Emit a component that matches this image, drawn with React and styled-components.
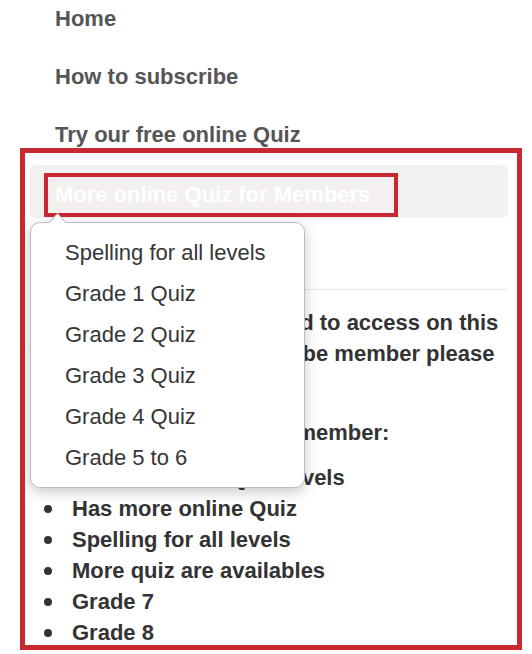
import React from "react";
import styled, { createGlobalStyle } from "styled-components";

// page reset: white page, no body margin, Arial-like font
const GlobalStyle = createGlobalStyle`
  body {
    margin: 0;
    background: #fff;
    font-family: "Liberation Sans", Arial, Helvetica, sans-serif;
  }
`;

const menuItems = [
  "Spelling for all levels",
  "Grade 1 Quiz",
  "Grade 2 Quiz",
  "Grade 3 Quiz",
  "Grade 4 Quiz",
  "Grade 5 to 6",
];

const benefits = [
  "Can access all Quiz levels",
  "Has more online Quiz",
  "Spelling for all levels",
  "More quiz are availables",
  "Grade 7",
  "Grade 8",
];

function App() {
  return (
    <>
      <GlobalStyle />
      <Page>
        <Nav>
          <NavLink>Home</NavLink>
          <NavLink>How to subscribe</NavLink>
          <NavLink>Try our free online Quiz</NavLink>
        </Nav>
        <Frame>
          <MemberBar>
            <Highlight>More online Quiz for Members</Highlight>
          </MemberBar>
          <Divider />
          <Text>
            Members Quiz are required to access on this
            <br />
            website. If you do wish to be member please
            <br />
            contact us.
          </Text>
          <Heading>Some benefits of being a member:</Heading>
          <List>
            {benefits.map((b) => (
              <Bullet key={b}>{b}</Bullet>
            ))}
          </List>
          {/* popover menu opened under the members tab */}
          <Dropdown>
            <Arrow />
            {menuItems.map((item) => (
              <MenuItem key={item}>{item}</MenuItem>
            ))}
          </Dropdown>
        </Frame>
      </Page>
    </>
  );
}

const Page = styled.div`
  width: 532px;
  height: 654px;
  overflow: hidden;
`;

const Nav = styled.nav`
  display: flex;
  flex-direction: column;
  gap: 32px;
  padding: 6px 0 0 55px;
  height: 148px;
  box-sizing: border-box;
`;

const NavLink = styled.a`
  display: block;
  font-size: 22px;
  line-height: 26px;
  font-weight: bold;
  color: #555;
  text-decoration: none;
  cursor: pointer;
`;

const Frame = styled.section`
  position: relative;
  margin-left: 20px;
  width: 502px;
  height: 502px;
  box-sizing: border-box;
  border: 5px solid #c8282f;
  padding: 12px 9px 0 5px;
  overflow: hidden;
`;

const MemberBar = styled.div`
  display: flex;
  align-items: flex-start;
  height: 53px;
  box-sizing: border-box;
  padding: 8px 14px 0;
  background: #f1f1f1;
  border-radius: 6px;
`;

const Highlight = styled.span`
  display: inline-block;
  border: 4px solid #c8282f;
  padding: 0 24px 0 7px;
  height: 44px;
  box-sizing: border-box;
  font-size: 22px;
  line-height: 36px;
  font-weight: bold;
  color: #fff;
  background: #f4f0f0;
`;

const Divider = styled.hr`
  border: none;
  border-top: 1px solid #e8e8e8;
  margin: 71px 0 0;
`;

const Text = styled.p`
  margin: 17px 0 17px;
  font-size: 22px;
  line-height: 31px;
  font-weight: bold;
  color: #333;
  white-space: nowrap;
`;

const Heading = styled(Text)`
  margin: 0 0 14px;
`;

const List = styled.ul`
  margin: 0;
  padding: 0 0 0 14px;
  list-style: none;
  font-size: 22px;
  line-height: 31px;
  font-weight: bold;
  color: #333;
`;

const Bullet = styled.li`
  display: flex;
  align-items: center;
  gap: 20px;

  &::before {
    content: "";
    width: 8px;
    height: 8px;
    border-radius: 50%;
    background: #333;
    flex-shrink: 0;
  }
`;

const Dropdown = styled.div`
  position: absolute;
  top: 69px;
  left: 5px;
  width: 275px;
  box-sizing: border-box;
  padding: 9px 0;
  background: #fff;
  border: 1px solid #bdbdbd;
  border-radius: 10px;
  box-shadow: 0 4px 14px rgba(0, 0, 0, 0.22);
`;

const Arrow = styled.span`
  position: absolute;
  top: -7px;
  left: 20px;
  width: 12px;
  height: 12px;
  background: #fff;
  border-top: 1px solid #bdbdbd;
  border-left: 1px solid #bdbdbd;
  transform: rotate(45deg);
`;

const MenuItem = styled.div`
  height: 41px;
  padding-left: 34px;
  font-size: 22px;
  line-height: 41px;
  color: #363636;
  cursor: pointer;
`;

export default App;
